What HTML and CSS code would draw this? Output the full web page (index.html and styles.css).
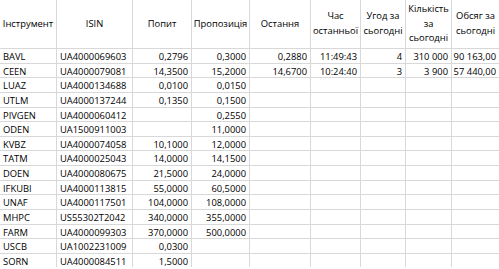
FILE: index.html
```html
<!DOCTYPE html>
<html lang="uk">
<head>
<meta charset="utf-8">
<title>Інструменти</title>
<link rel="stylesheet" href="styles.css">
</head>
<body>
<div class="sheet">
  <div class="c h">Інструмент</div>
  <div class="c h">ISIN</div>
  <div class="c h">Попит</div>
  <div class="c h">Пропозиція</div>
  <div class="c h">Остання</div>
  <div class="c h">Час<br>останньої</div>
  <div class="c h">Угод за<br>сьогодні</div>
  <div class="c h">Кількість<br>за<br>сьогодні</div>
  <div class="c h">Обсяг за<br>сьогодні</div>

  <div class="c">BAVL</div><div class="c">UA4000069603</div><div class="c n">0,2796</div><div class="c n">0,3000</div><div class="c n">0,2880</div><div class="c n">11:49:43</div><div class="c n">4</div><div class="c n">310 000</div><div class="c n">90 163,00</div>
  <div class="c">CEEN</div><div class="c">UA4000079081</div><div class="c n">14,3500</div><div class="c n">15,2000</div><div class="c n">14,6700</div><div class="c n">10:24:40</div><div class="c n">3</div><div class="c n">3 900</div><div class="c n">57 440,00</div>
  <div class="c">LUAZ</div><div class="c">UA4000134688</div><div class="c n">0,0100</div><div class="c n">0,0150</div><div class="c"></div><div class="c"></div><div class="c"></div><div class="c"></div><div class="c"></div>
  <div class="c">UTLM</div><div class="c">UA4000137244</div><div class="c n">0,1350</div><div class="c n">0,1500</div><div class="c"></div><div class="c"></div><div class="c"></div><div class="c"></div><div class="c"></div>
  <div class="c">PIVGEN</div><div class="c">UA4000060412</div><div class="c n"></div><div class="c n">0,2550</div><div class="c"></div><div class="c"></div><div class="c"></div><div class="c"></div><div class="c"></div>
  <div class="c">ODEN</div><div class="c">UA1500911003</div><div class="c n"></div><div class="c n">11,0000</div><div class="c"></div><div class="c"></div><div class="c"></div><div class="c"></div><div class="c"></div>
  <div class="c">KVBZ</div><div class="c">UA4000074058</div><div class="c n">10,1000</div><div class="c n">12,0000</div><div class="c"></div><div class="c"></div><div class="c"></div><div class="c"></div><div class="c"></div>
  <div class="c">TATM</div><div class="c">UA4000025043</div><div class="c n">14,0000</div><div class="c n">14,1500</div><div class="c"></div><div class="c"></div><div class="c"></div><div class="c"></div><div class="c"></div>
  <div class="c">DOEN</div><div class="c">UA4000080675</div><div class="c n">21,5000</div><div class="c n">24,0000</div><div class="c"></div><div class="c"></div><div class="c"></div><div class="c"></div><div class="c"></div>
  <div class="c">IFKUBI</div><div class="c">UA4000113815</div><div class="c n">55,0000</div><div class="c n">60,5000</div><div class="c"></div><div class="c"></div><div class="c"></div><div class="c"></div><div class="c"></div>
  <div class="c">UNAF</div><div class="c">UA4000117501</div><div class="c n">104,0000</div><div class="c n">108,0000</div><div class="c"></div><div class="c"></div><div class="c"></div><div class="c"></div><div class="c"></div>
  <div class="c">MHPC</div><div class="c">US55302T2042</div><div class="c n">340,0000</div><div class="c n">355,0000</div><div class="c"></div><div class="c"></div><div class="c"></div><div class="c"></div><div class="c"></div>
  <div class="c">FARM</div><div class="c">UA4000099303</div><div class="c n">370,0000</div><div class="c n">500,0000</div><div class="c"></div><div class="c"></div><div class="c"></div><div class="c"></div><div class="c"></div>
  <div class="c">USCB</div><div class="c">UA1002231009</div><div class="c n">0,0300</div><div class="c n"></div><div class="c"></div><div class="c"></div><div class="c"></div><div class="c"></div><div class="c"></div>
  <div class="c">SORN</div><div class="c">UA4000084511</div><div class="c n">1,5000</div><div class="c n"></div><div class="c"></div><div class="c"></div><div class="c"></div><div class="c"></div><div class="c"></div>
</div>
</body>
</html>
```
FILE: styles.css
```css
html, body {
  margin: 0;
  padding: 0;
  background: #ffffff;
}
.sheet {
  display: grid;
  grid-template-columns: 56px 75px 58px 57px 60px 49px 44px 45px 47px;
  grid-template-rows: 48px repeat(15, 13.64px);
  gap: 1px;
  background: #d8d8d8;
  width: 499px;
  font-family: "Open Sans", "Liberation Sans", sans-serif;
  font-size: 9.4px;
  color: #000000;
  overflow: hidden;
}
.c {
  background: #ffffff;
  padding: 1px 2px 0 3px;
  line-height: 13.64px;
  white-space: nowrap;
  overflow: hidden;
}
.h {
  display: flex;
  align-items: center;
  justify-content: center;
  text-align: center;
  line-height: 14.6px;
  padding: 0;
}
.n {
  text-align: right;
  padding: 1px 3px 0 0;
}
```
